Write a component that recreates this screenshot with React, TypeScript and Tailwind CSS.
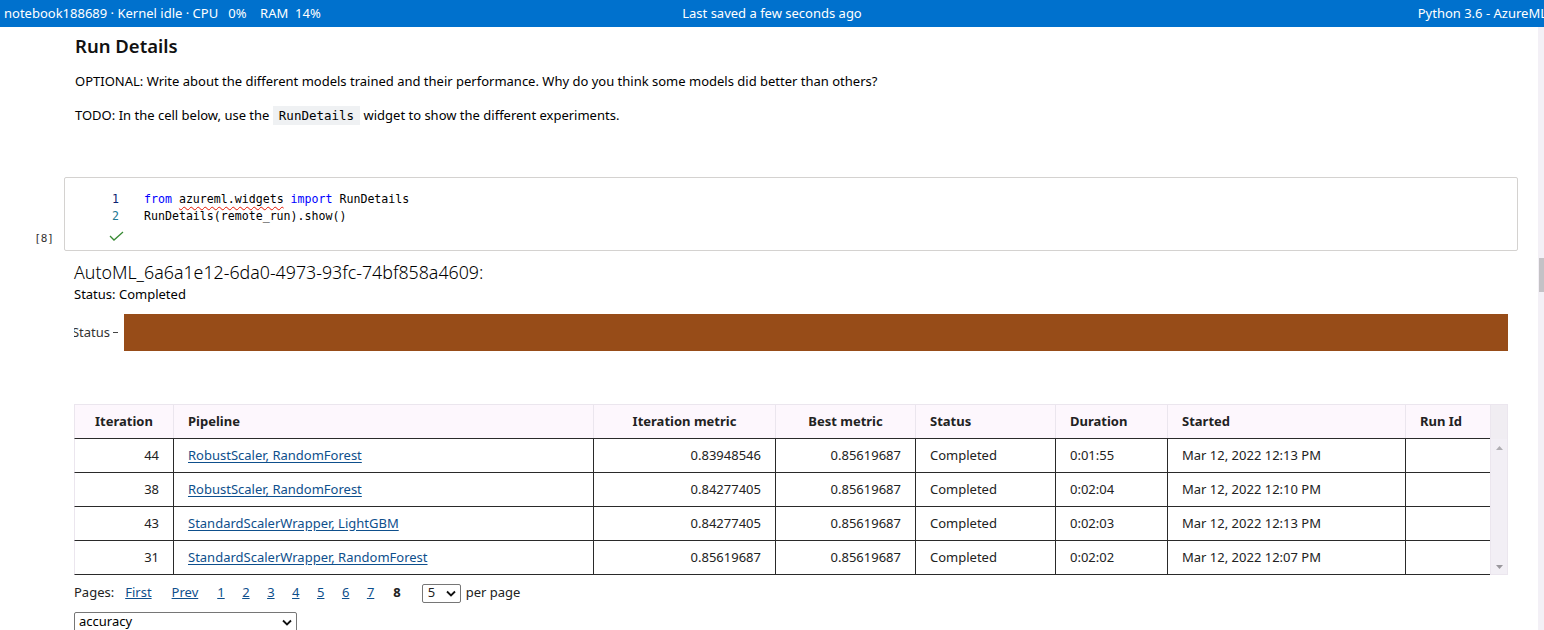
import React from 'react';

const ui = { fontFamily: '"Noto Sans", "Open Sans", sans-serif' };
const mono = { fontFamily: '"DejaVu Sans Mono", "Liberation Mono", monospace' };

const rows = [
  { it: '44', pipe: 'RobustScaler, RandomForest', im: '0.83948546', dur: '0:01:55', started: 'Mar 12, 2022 12:13 PM' },
  { it: '38', pipe: 'RobustScaler, RandomForest', im: '0.84277405', dur: '0:02:04', started: 'Mar 12, 2022 12:10 PM' },
  { it: '43', pipe: 'StandardScalerWrapper, LightGBM', im: '0.84277405', dur: '0:02:03', started: 'Mar 12, 2022 12:13 PM' },
  { it: '31', pipe: 'StandardScalerWrapper, RandomForest', im: '0.85619687', dur: '0:02:02', started: 'Mar 12, 2022 12:07 PM' },
];

const cols = 'grid grid-cols-[99px_420px_182px_140px_140px_112px_238px_84px]';

// small chevron used by the fake select boxes
const Chevron = () => (
  <svg width="10" height="7" viewBox="0 0 10 7" fill="none" stroke="#111" strokeWidth="1.8">
    <path d="M1 1.5L5 5.5L9 1.5" />
  </svg>
);

const App = () => {
  const pages = ['1', '2', '3', '4', '5', '6', '7'];

  return (
    <div className="w-[1544px] h-[630px] overflow-hidden bg-white text-[#1b1b1b] relative" style={ui}>
      {/* top status bar */}
      <div className="h-[27px] bg-[#0071cd] text-white text-[13px] grid grid-cols-3 items-center">
        <div className="pl-[4px] whitespace-pre">notebook188689 · Kernel idle · CPU   0%    RAM  14%</div>
        <div className="text-center whitespace-nowrap">Last saved a few seconds ago</div>
        <div className="text-right whitespace-nowrap -mr-[3px]">Python 3.6 - AzureML</div>
      </div>

      {/* right page scrollbar */}
      <div className="absolute right-0 top-[27px] bottom-0 w-[6px] bg-[#f3f0f6]">
        <div className="mt-[231px] h-[34px] w-[5px] ml-[1px] bg-[#c4c2c6]" />
      </div>

      <div className="w-[1538px]">
        {/* markdown cell */}
        <div className="pl-[75px]">
          <h1 className="mt-[6px] text-[18.5px] leading-[26px] font-semibold text-[#111]">Run Details</h1>
          <p className="mt-[12px] text-[13px] leading-[20px] text-black">
            OPTIONAL: Write about the different models trained and their performance. Why do you think some models did better than others?
          </p>
          <p className="mt-[14px] text-[13px] leading-[20px] text-black">
            TODO: In the cell below, use the{' '}
            <code className="bg-[#eff1f3] px-[6px] py-[2px] text-[12.5px]" style={mono}>RunDetails</code>{' '}
            widget to show the different experiments.
          </p>
        </div>

        {/* code cell */}
        <div className="mt-[51px] flex">
          <div className="w-[64px] flex items-end justify-end pr-[10px] pb-[4px] text-[11px] text-[#333]" style={mono}>[8]</div>
          <div className="w-[1454px] h-[74px] border border-[#d4d2d0] rounded-[2px] pt-[13px]">
            <div className="grid grid-cols-[54px_1fr] gap-x-[25px] text-[11.6px] leading-[17px]" style={mono}>
              <div className="text-right text-[#0b216f]">1</div>
              <div className="text-black whitespace-pre">
                <span className="text-[#0000ff]">from</span>{' '}
                <span className="underline decoration-wavy decoration-[#e51400] decoration-[1px] underline-offset-[3px]">azureml.widgets</span>{' '}
                <span className="text-[#0000ff]">import</span> RunDetails
              </div>
              <div className="text-right text-[#237893]">2</div>
              <div className="text-black whitespace-pre">RunDetails(remote_run).show()</div>
            </div>
            <div className="pl-[44px] mt-[6px]">
              <svg width="15" height="10" viewBox="0 0 15 10" fill="none" stroke="#388a34" strokeWidth="1.3">
                <path d="M1 5L5 9L14 1" />
              </svg>
            </div>
          </div>
        </div>

        {/* widget output */}
        <div className="pl-[74px]">
          <div className="mt-[9px] text-[17.8px] leading-[24px] font-light text-black">AutoML_6a6a1e12-6da0-4973-93fc-74bf858a4609:</div>
          <div className="text-[13px] leading-[20px] text-black">Status: Completed</div>

          {/* status timeline bar */}
          <div className="mt-[10px] flex items-center">
            <div className="w-[50px] h-[37px] overflow-hidden flex items-center justify-end pr-[6px] text-[13px] text-[#333]">
              <span className="whitespace-nowrap">Status</span>
              <span className="ml-[3px] w-[5px] h-px shrink-0 bg-[#444]" />
            </div>
            <div className="w-[1384px] h-[37px] bg-[#974c18]" />
          </div>

          {/* runs table */}
          <div className="mt-[53px] w-[1434px] flex text-[13px]">
            <div>
              <div className={`${cols} h-[34px] bg-[#fdf7fd] border-t border-l border-[#ebe6ee] font-bold text-[#222]`}>
                <div className="flex items-center justify-center border-r border-[#ebe6ee]">Iteration</div>
                <div className="flex items-center pl-[14px] border-r border-[#ebe6ee]">Pipeline</div>
                <div className="flex items-center justify-center border-r border-[#ebe6ee]">Iteration metric</div>
                <div className="flex items-center justify-center border-r border-[#ebe6ee]">Best metric</div>
                <div className="flex items-center pl-[14px] border-r border-[#ebe6ee]">Status</div>
                <div className="flex items-center pl-[14px] border-r border-[#ebe6ee]">Duration</div>
                <div className="flex items-center pl-[14px] border-r border-[#ebe6ee]">Started</div>
                <div className="flex items-center pl-[14px]">Run Id</div>
              </div>
              {rows.map((r, i) => (
                <div key={i} className={`${cols} h-[34px] border-t border-l border-t-[#2a2a2a] border-l-[#ebe6ee] ${i === rows.length - 1 ? 'border-b border-b-[#2a2a2a] h-[35px]' : ''} text-[#222]`}>
                  <div className="flex items-center justify-end pr-[14px] border-r border-[#2a2a2a]">{r.it}</div>
                  <div className="flex items-center pl-[14px] border-r border-[#2a2a2a]">
                    <span className="underline text-[#0e4f8c] underline-offset-[2px]">{r.pipe}</span>
                  </div>
                  <div className="flex items-center justify-end pr-[14px] border-r border-[#2a2a2a]">{r.im}</div>
                  <div className="flex items-center justify-end pr-[14px] border-r border-[#2a2a2a]">0.85619687</div>
                  <div className="flex items-center pl-[14px] border-r border-[#2a2a2a]">Completed</div>
                  <div className="flex items-center pl-[14px] border-r border-[#2a2a2a]">{r.dur}</div>
                  <div className="flex items-center pl-[14px] border-r border-[#2a2a2a]">{r.started}</div>
                  <div />
                </div>
              ))}
            </div>
            {/* inner table scrollbar */}
            <div className="w-[19px] border border-[#ebe6ee] bg-[#f2eff5] flex flex-col">
              <div className="h-[34px] bg-[#f0edf2]" />
              <div className="flex-1 flex flex-col items-center justify-between pt-[7px] pb-[5px]">
                <svg width="7" height="4" viewBox="0 0 7 4"><path d="M0 4L3.5 0L7 4Z" fill="#b0aeb3" /></svg>
                <svg width="7" height="4" viewBox="0 0 7 4"><path d="M0 0L3.5 4L7 0Z" fill="#9a989d" /></svg>
              </div>
            </div>
          </div>

          {/* pagination */}
          <div className="mt-[8px] h-[20px] flex items-center text-[13px] text-[#222]">
            <span>Pages:</span>
            <span className="ml-[11px] underline text-[#0e4f8c]">First</span>
            <span className="ml-[20px] underline text-[#0e4f8c]">Prev</span>
            {pages.map((p, i) => (
              <span key={p} className={`${i === 0 ? 'ml-[19px]' : 'ml-[17.5px]'} underline text-[#0e4f8c]`}>{p}</span>
            ))}
            <span className="ml-[19px] font-bold">8</span>
            <div className="ml-[21px] w-[39px] h-[19px] border border-[#767676] rounded-[2px] flex items-center justify-between pl-[5px] pr-[4px]">
              <span>5</span>
              <Chevron />
            </div>
            <span className="ml-[5px]">per page</span>
          </div>

          {/* metric select */}
          <div className="mt-[9px] w-[223px] h-[20px] border border-[#767676] rounded-[2px] flex items-center justify-between pl-[4px] pr-[4px] text-[13px] text-black">
            <span>accuracy</span>
            <Chevron />
          </div>
        </div>
      </div>
    </div>
  );
};

export default App;
